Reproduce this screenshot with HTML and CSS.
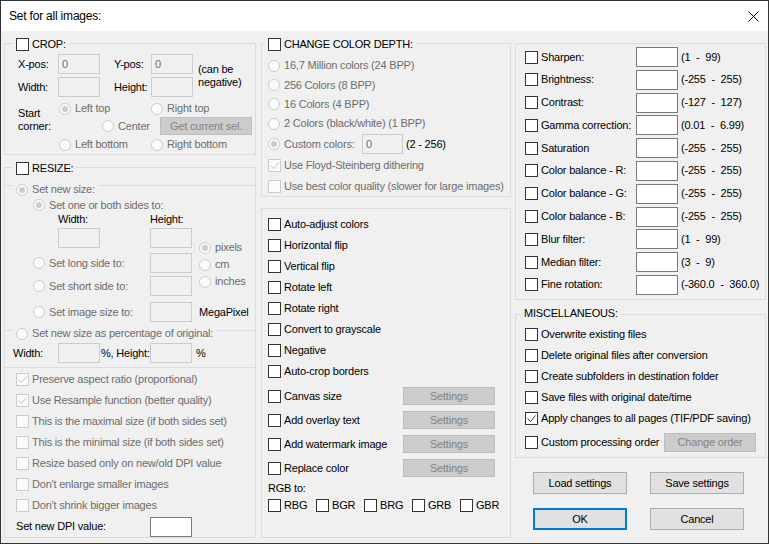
FILE: index.html
```html
<!DOCTYPE html>
<html>
<head>
<meta charset="utf-8">
<title>Set for all images</title>
<link rel="stylesheet" href="styles.css">
</head>
<body>
<div class="window">
  <div class="titlebar">
    <span class="title">Set for all images:</span>
    <svg class="close" width="11" height="11" viewBox="0 0 11 11"><path d="M0.5 0.5L10.5 10.5M10.5 0.5L0.5 10.5"/></svg>
  </div>
  <div class="body">
    <!-- LEFT COLUMN -->
    <div class="col col-left">
      <div class="group g-crop">
        <div class="legend lg-left"><span class="cb"></span><span>CROP:</span></div>
        <div class="crop-grid">
          <span class="lbl">X-pos:</span>
          <span class="inp dis">0</span>
          <span class="lbl lbl-y">Y-pos:</span>
          <span class="inp dis">0</span>
          <span class="note">(can be<br>negative)</span>
          <span class="lbl">Width:</span>
          <span class="inp dis"></span>
          <span class="lbl lbl-y">Height:</span>
          <span class="inp dis"></span>
        </div>
        <div class="corner-grid">
          <span class="corner-lbl">Start<br>corner:</span>
          <span class="opt dis c-lt"><span class="rb dis on"></span>Left top</span>
          <span class="opt dis c-rt"><span class="rb dis"></span>Right top</span>
          <span class="opt dis c-c"><span class="rb dis"></span>Center</span>
          <span class="btn dis c-btn">Get current sel.</span>
          <span class="opt dis c-lb"><span class="rb dis"></span>Left bottom</span>
          <span class="opt dis c-rb"><span class="rb dis"></span>Right bottom</span>
        </div>
      </div>

      <div class="group g-resize">
        <div class="legend lg-left"><span class="cb"></span><span>RESIZE:</span></div>
        <div class="sub sub1">
          <div class="legend lg-sub lg-sub1"><span class="rb dis on"></span><span class="dis-t">Set new size:</span></div>
          <div class="size-grid">
            <span class="opt dis s-one"><span class="rb dis on"></span>Set one or both sides to:</span>
            <span class="lbl s-wl">Width:</span>
            <span class="lbl s-hl">Height:</span>
            <span class="inp dis s-w"></span>
            <span class="inp dis s-h"></span>
            <div class="units">
              <span class="opt dis u-row"><span class="rb dis on"></span>pixels</span>
              <span class="opt dis u-row"><span class="rb dis"></span>cm</span>
              <span class="opt dis u-row"><span class="rb dis"></span>inches</span>
            </div>
            <span class="opt dis s-r s-r4"><span class="rb dis"></span>Set long side to:</span>
            <span class="inp dis s-i s-i4"></span>
            <span class="opt dis s-r s-r5"><span class="rb dis"></span>Set short side to:</span>
            <span class="inp dis s-i s-i5"></span>
            <span class="opt dis s-r s-r6"><span class="rb dis"></span>Set image size to:</span>
            <span class="inp dis s-i s-i6"></span>
            <span class="lbl s-mp">MegaPixel</span>
          </div>
        </div>
        <div class="sub sub2">
          <div class="legend lg-sub lg-sub2"><span class="rb dis"></span><span class="dis-t">Set new size as percentage of original:</span></div>
          <div class="pct-row">
            <span class="pct-lbl">Width:</span>
            <span class="inp dis"></span>
            <span class="pct-mid">%, Height:</span>
            <span class="inp dis"></span>
            <span class="pct-end">%</span>
          </div>
        </div>
        <div class="cb-list">
          <span class="opt dis r21"><span class="cb dis"><svg width="11" height="11" viewBox="0 0 11 11"><path d="M1.5 5.5L4.5 8.5L9.5 2.5"/></svg></span>Preserve aspect ratio (proportional)</span>
          <span class="opt dis r21"><span class="cb dis"><svg width="11" height="11" viewBox="0 0 11 11"><path d="M1.5 5.5L4.5 8.5L9.5 2.5"/></svg></span>Use Resample function (better quality)</span>
          <span class="opt dis r21"><span class="cb dis"></span>This is the maximal size (if both sides set)</span>
          <span class="opt dis r21"><span class="cb dis"></span>This is the minimal size (if both sides set)</span>
          <span class="opt dis r21"><span class="cb dis"></span>Resize based only on new/old DPI value</span>
          <span class="opt dis r21"><span class="cb dis"></span>Don't enlarge smaller images</span>
          <span class="opt dis r21"><span class="cb dis"></span>Don't shrink bigger images</span>
        </div>
        <div class="dpi-row">
          <span class="dpi-lbl">Set new DPI value:</span>
          <span class="inp dpi-inp"></span>
        </div>
      </div>
    </div>

    <!-- MIDDLE COLUMN -->
    <div class="col col-mid">
      <div class="group g-depth">
        <div class="legend lg-mid"><span class="cb"></span><span>CHANGE COLOR DEPTH:</span></div>
        <div class="depth-rows">
          <span class="opt dis d1"><span class="rb dis"></span>16,7 Million colors (24 BPP)</span>
          <span class="opt dis d2"><span class="rb dis"></span>256 Colors (8 BPP)</span>
          <span class="opt dis d3"><span class="rb dis"></span>16 Colors (4 BPP)</span>
          <span class="opt dis d4"><span class="rb dis"></span>2 Colors (black/white) (1 BPP)</span>
          <div class="opt d5">
            <span class="opt dis custom-opt"><span class="rb dis on"></span>Custom colors:</span>
            <span class="inp dis inp-c">0</span>
            <span class="range-c">(2 - 256)</span>
          </div>
          <span class="opt dis d6"><span class="cb dis"><svg width="11" height="11" viewBox="0 0 11 11"><path d="M1.5 5.5L4.5 8.5L9.5 2.5"/></svg></span>Use Floyd-Steinberg dithering</span>
          <span class="opt dis d7"><span class="cb dis"></span>Use best color quality (slower for large images)</span>
        </div>
      </div>

      <div class="group g-ops">
        <span class="opt r21"><span class="cb"></span>Auto-adjust colors</span>
        <span class="opt r21"><span class="cb"></span>Horizontal flip</span>
        <span class="opt r21"><span class="cb"></span>Vertical flip</span>
        <span class="opt r21"><span class="cb"></span>Rotate left</span>
        <span class="opt r21"><span class="cb"></span>Rotate right</span>
        <span class="opt r21"><span class="cb"></span>Convert to grayscale</span>
        <span class="opt r21"><span class="cb"></span>Negative</span>
        <span class="opt r21"><span class="cb"></span>Auto-crop borders</span>
        <div class="op-btn-row first">
          <span class="opt op-lbl"><span class="cb"></span>Canvas size</span>
          <span class="btn dis op-btn">Settings</span>
        </div>
        <div class="op-btn-row">
          <span class="opt op-lbl"><span class="cb"></span>Add overlay text</span>
          <span class="btn dis op-btn">Settings</span>
        </div>
        <div class="op-btn-row">
          <span class="opt op-lbl"><span class="cb"></span>Add watermark image</span>
          <span class="btn dis op-btn">Settings</span>
        </div>
        <div class="op-btn-row">
          <span class="opt op-lbl"><span class="cb"></span>Replace color</span>
          <span class="btn dis op-btn">Settings</span>
        </div>
        <div class="rgb-lbl">RGB to:</div>
        <div class="rgb-row">
          <span class="opt rgb-item"><span class="cb"></span>RBG</span>
          <span class="opt rgb-item"><span class="cb"></span>BGR</span>
          <span class="opt rgb-item"><span class="cb"></span>BRG</span>
          <span class="opt rgb-item"><span class="cb"></span>GRB</span>
          <span class="opt rgb-item"><span class="cb"></span>GBR</span>
        </div>
      </div>
    </div>

    <!-- RIGHT COLUMN -->
    <div class="col col-right">
      <div class="group g-filters">
        <div class="frow"><span class="opt f-lbl"><span class="cb"></span>Sharpen:</span><span class="inp"></span><span class="range">(1  -  99)</span></div>
        <div class="frow"><span class="opt f-lbl"><span class="cb"></span>Brightness:</span><span class="inp"></span><span class="range">(-255  -  255)</span></div>
        <div class="frow"><span class="opt f-lbl"><span class="cb"></span>Contrast:</span><span class="inp"></span><span class="range">(-127  -  127)</span></div>
        <div class="frow"><span class="opt f-lbl"><span class="cb"></span>Gamma correction:</span><span class="inp"></span><span class="range">(0.01  -  6.99)</span></div>
        <div class="frow"><span class="opt f-lbl"><span class="cb"></span>Saturation</span><span class="inp"></span><span class="range">(-255  -  255)</span></div>
        <div class="frow"><span class="opt f-lbl"><span class="cb"></span>Color balance - R:</span><span class="inp"></span><span class="range">(-255  -  255)</span></div>
        <div class="frow"><span class="opt f-lbl"><span class="cb"></span>Color balance - G:</span><span class="inp"></span><span class="range">(-255  -  255)</span></div>
        <div class="frow"><span class="opt f-lbl"><span class="cb"></span>Color balance - B:</span><span class="inp"></span><span class="range">(-255  -  255)</span></div>
        <div class="frow"><span class="opt f-lbl"><span class="cb"></span>Blur filter:</span><span class="inp"></span><span class="range">(1  -  99)</span></div>
        <div class="frow"><span class="opt f-lbl"><span class="cb"></span>Median filter:</span><span class="inp"></span><span class="range">(3  -  9)</span></div>
        <div class="frow"><span class="opt f-lbl"><span class="cb"></span>Fine rotation:</span><span class="inp"></span><span class="range">(-360.0  -  360.0)</span></div>
      </div>

      <div class="group g-misc">
        <div class="legend lg-misc"><span>MISCELLANEOUS:</span></div>
        <div class="misc-rows">
          <span class="opt r21"><span class="cb"></span>Overwrite existing files</span>
          <span class="opt r21"><span class="cb"></span>Delete original files after conversion</span>
          <span class="opt r21"><span class="cb"></span>Create subfolders in destination folder</span>
          <span class="opt r21"><span class="cb"></span>Save files with original date/time</span>
          <span class="opt r21"><span class="cb"><svg width="11" height="11" viewBox="0 0 11 11"><path d="M1.5 5.5L4.5 8.5L9.5 2.5"/></svg></span>Apply changes to all pages (TIF/PDF saving)</span>
          <div class="misc-last">
            <span class="opt misc-lbl"><span class="cb"></span>Custom processing order</span>
            <span class="btn dis misc-btn">Change order</span>
          </div>
        </div>
      </div>

      <div class="btn-grid">
        <span class="btn">Load settings</span>
        <span class="btn">Save settings</span>
        <span class="btn def">OK</span>
        <span class="btn">Cancel</span>
      </div>
    </div>
  </div>
</div>
</body>
</html>
```

FILE: styles.css
```css
* { box-sizing: border-box; }
html, body { margin: 0; padding: 0; }
body {
  width: 769px;
  height: 544px;
  overflow: hidden;
  background: #f0f0f0;
  font-family: "Liberation Sans", Arial, sans-serif;
  font-size: 11px;
  line-height: 13px;
  letter-spacing: -0.2px;
  color: #000;
}
.window {
  width: 769px;
  height: 544px;
  border: 1px solid #333;
  background: #f0f0f0;
  display: flex;
  flex-direction: column;
}
.titlebar {
  height: 30px;
  flex: none;
  background: #fff;
  display: flex;
  align-items: center;
  justify-content: space-between;
  padding: 0 9px 0 8px;
}
.title { font-size: 12px; }
.close { display: block; fill: none; stroke: #000; stroke-width: 1; margin-top: 1px; }

.body { display: flex; padding: 12px 0 0 3px; }
.col { display: flex; flex-direction: column; flex: none; }
.col-left { width: 252px; }
.col-mid { width: 250px; margin-left: 5px; }
.col-right { width: 251px; margin-left: 4px; }

.group {
  border: 1px solid #dcdcdc;
  display: flex;
  flex-direction: column;
  flex: none;
}
.legend {
  display: flex;
  align-items: center;
  height: 13px;
  align-self: flex-start;
  background: #f0f0f0;
  padding: 0 3px;
  white-space: nowrap;
  flex: none;
}

/* controls */
.opt { display: flex; align-items: center; white-space: nowrap; }
.opt.dis, .dis-t { color: #6d6d6d; }
.cb {
  width: 13px;
  height: 13px;
  flex: none;
  border: 1px solid #333;
  background: #fff;
  margin-right: 3px;
  color: #333;
}
.cb.dis { border-color: #cccccc; background: #fbfbfb; color: #c4c4c4; }
.cb svg { display: block; fill: none; stroke: currentColor; stroke-width: 1; }
.rb {
  width: 12px;
  height: 12px;
  flex: none;
  border: 1px solid #333;
  border-radius: 50%;
  background: #fff;
  margin-right: 4px;
  display: flex;
  align-items: center;
  justify-content: center;
}
.rb.dis { border-color: #cccccc; background: #fbfbfb; }
.rb.on::after {
  content: "";
  width: 6px;
  height: 6px;
  border-radius: 50%;
  background: #cccccc;
}
.inp {
  display: block;
  width: 42px;
  height: 20px;
  flex: none;
  border: 1px solid #7a7a7a;
  background: #fff;
  padding-left: 3px;
  line-height: 18px;
}
.inp.dis { border-color: #cccccc; background: #f0f0f0; color: #6d6d6d; }
.btn {
  display: flex;
  align-items: center;
  justify-content: center;
  background: #e1e1e1;
  border: 1px solid #adadad;
  white-space: nowrap;
}
.btn.dis { background: #cccccc; border-color: #bfbfbf; color: #838383; }
.btn.def { border: 2px solid #0078d7; }
.lbl { display: flex; align-items: center; white-space: nowrap; }
.r21 { height: 21px; }

/* CROP */
.g-crop { height: 112px; }
.lg-left { margin: -6px 0 0 8px; }
.crop-grid {
  display: grid;
  grid-template-columns: 40px 42px 51px 42px auto;
  grid-template-rows: 20px 20px;
  row-gap: 3px;
  margin: 3px 0 0 13px;
}
.lbl-y { padding-left: 14px; }
.note { grid-column: 5; grid-row: 1 / 3; padding: 9px 0 0 5px; white-space: nowrap; }
.corner-grid {
  display: grid;
  grid-template-columns: 40px 44px 49px 9px 92px;
  grid-template-rows: 17px 18px 19px;
  margin: 3px 0 0 13px;
}
.corner-lbl { grid-column: 1; grid-row: 1 / 3; padding-top: 7px; }
.c-lt { grid-column: 2 / 4; grid-row: 1; margin-left: 1px; }
.c-rt { grid-column: 4 / 6; grid-row: 1; }
.c-c { grid-column: 3 / 5; grid-row: 2; }
.c-btn { grid-column: 5; grid-row: 2; }
.c-lb { grid-column: 2 / 4; grid-row: 3; margin-left: 1px; }
.c-rb { grid-column: 4 / 6; grid-row: 3; }

/* RESIZE */
.g-resize { height: 371px; margin-top: 12px; }
.sub { border-top: 1px solid #dcdcdc; display: flex; flex-direction: column; flex: none; }
.sub1 { margin-top: 10px; padding-bottom: 8px; }
.sub2 { border-bottom: 1px solid #dcdcdc; padding-bottom: 4px; }
.lg-sub { margin-left: 8px; }
.lg-sub1 { margin-top: -3px; }
.lg-sub2 { margin-top: -4px; }
.size-grid {
  display: grid;
  grid-template-columns: 117px 42px 7px auto;
  grid-template-rows: 16px 15px 25px 23px 26px 20px;
  margin: 1px 0 0 28px;
}
.s-one { grid-column: 1 / 5; grid-row: 1; }
.s-wl { grid-column: 1; grid-row: 2; padding-left: 25px; align-items: flex-start; }
.s-hl { grid-column: 2; grid-row: 2; align-items: flex-start; }
.s-w { grid-column: 1; grid-row: 3; margin-left: 25px; }
.s-h { grid-column: 2; grid-row: 3; }
.units { grid-column: 4; grid-row: 3 / 6; margin-top: 11px; display: flex; flex-direction: column; }
.u-row { height: 17px; }
.s-r { grid-column: 1; height: 20px; align-self: start; }
.s-i { grid-column: 2; align-self: start; }
.s-r4, .s-i4 { grid-row: 4; }
.s-r5, .s-i5 { grid-row: 5; }
.s-r6, .s-i6 { grid-row: 6; }
.s-mp { grid-column: 4; grid-row: 6; height: 20px; }
.pct-row { display: flex; align-items: center; height: 20px; margin: 3px 0 0 8px; }
.pct-lbl { width: 45px; }
.pct-mid { width: 50px; padding-left: 1px; white-space: nowrap; }
.pct-end { margin-left: 4px; }
.cb-list { display: flex; flex-direction: column; margin: 1px 0 0 11px; }
.dpi-row { display: flex; align-items: center; height: 21px; margin-left: 11px; }
.dpi-lbl { width: 134px; }
.dpi-inp { align-self: flex-end; }

/* MIDDLE */
.g-depth { height: 154px; }
.lg-mid { margin: -6px 0 0 3px; }
.depth-rows { display: flex; flex-direction: column; margin: 5px 0 0 6px; }
.d1 { height: 19px; }
.d2 { height: 20px; }
.d3 { height: 18px; }
.d4 { height: 21px; }
.d5 { height: 20px; }
.d6 { height: 23px; }
.d7 { height: 19px; }
.custom-opt { width: 94px; }
.inp-c { width: 41px; }
.range-c { margin-left: 3px; }
.g-ops { height: 330px; margin-top: 11px; padding: 5px 0 0 6px; }
.op-btn-row { display: flex; align-items: center; height: 24px; flex: none; }
.op-btn-row.first { margin-top: 2px; }
.op-lbl { width: 135px; }
.op-btn { width: 92px; height: 18px; }
.rgb-lbl { height: 16px; display: flex; align-items: center; }
.rgb-row { display: flex; align-items: center; height: 19px; }
.rgb-item { width: 48px; }

/* RIGHT */
.g-filters { height: 257px; padding: 3px 0 0 9px; gap: 2.8px; }
.frow { display: flex; align-items: center; height: 20px; flex: none; }
.f-lbl { width: 111px; }
.range { margin-left: 3px; white-space: pre; }
.g-misc { height: 144px; margin-top: 14px; }
.lg-misc { margin: -8px 0 0 5px; }
.misc-rows { display: flex; flex-direction: column; margin: 4px 0 0 9px; }
.misc-last { display: flex; align-items: center; height: 21px; margin-top: 3px; }
.misc-lbl { width: 139px; }
.misc-btn { width: 92px; height: 19px; }
.btn-grid {
  display: grid;
  grid-template-columns: 94px 94px;
  grid-template-rows: 22px 22px;
  column-gap: 23px;
  row-gap: 14px;
  margin: 14px 0 0 18px;
}
```
